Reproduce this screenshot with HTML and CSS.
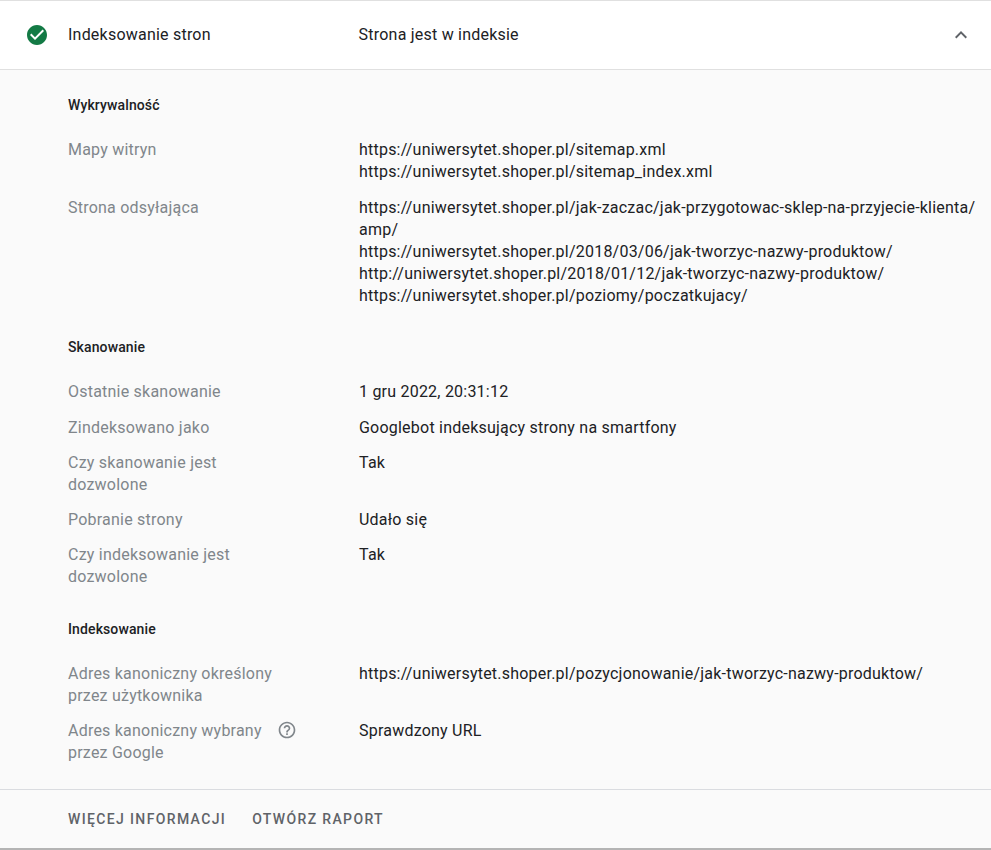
FILE: index.html
```html
<!DOCTYPE html>
<html lang="pl">
<head>
<meta charset="utf-8">
<title>Indeksowanie stron</title>
<link rel="stylesheet" href="styles.css">
</head>
<body>
<div class="panel">
  <header class="head">
    <svg class="status" viewBox="0 0 24 24" width="24" height="24"><path d="M12 2C6.48 2 2 6.48 2 12s4.48 10 10 10 10-4.48 10-10S17.52 2 12 2zm-2 15l-5-5 1.41-1.41L10 14.17l7.59-7.59L19 8l-9 9z"/></svg>
    <div class="head-title">Indeksowanie stron</div>
    <div class="head-value">Strona jest w indeksie</div>
    <svg class="chevron" viewBox="0 0 24 24" width="24" height="24"><path d="M12 8l-6 6 1.41 1.41L12 10.83l4.59 4.58L18 14z"/></svg>
  </header>
  <main class="content">
    <section class="group">
      <h2 class="group-title">Wykrywalność</h2>
      <div class="rows">
        <div class="row"><div class="label">Mapy witryn</div><div class="value"><div>https://uniwersytet.shoper.pl/sitemap.xml</div><div>https://uniwersytet.shoper.pl/sitemap_index.xml</div></div></div>
        <div class="row"><div class="label">Strona odsyłająca</div><div class="value"><div>https://uniwersytet.shoper.pl/jak-zaczac/jak-przygotowac-sklep-na-przyjecie-klienta/<wbr>amp/</div><div>https://uniwersytet.shoper.pl/2018/03/06/jak-tworzyc-nazwy-produktow/</div><div>http://uniwersytet.shoper.pl/2018/01/12/jak-tworzyc-nazwy-produktow/</div><div>https://uniwersytet.shoper.pl/poziomy/poczatkujacy/</div></div></div>
      </div>
    </section>
    <section class="group">
      <h2 class="group-title">Skanowanie</h2>
      <div class="rows">
        <div class="row"><div class="label">Ostatnie skanowanie</div><div class="value">1 gru 2022, 20:31:12</div></div>
        <div class="row"><div class="label">Zindeksowano jako</div><div class="value">Googlebot indeksujący strony na smartfony</div></div>
        <div class="row"><div class="label">Czy skanowanie jest dozwolone</div><div class="value">Tak</div></div>
        <div class="row"><div class="label">Pobranie strony</div><div class="value">Udało się</div></div>
        <div class="row"><div class="label">Czy indeksowanie jest dozwolone</div><div class="value">Tak</div></div>
      </div>
    </section>
    <section class="group">
      <h2 class="group-title">Indeksowanie</h2>
      <div class="rows">
        <div class="row"><div class="label">Adres kanoniczny określony przez użytkownika</div><div class="value">https://uniwersytet.shoper.pl/pozycjonowanie/jak-tworzyc-nazwy-produktow/</div></div>
        <div class="row"><div class="label">Adres kanoniczny wybrany przez Google</div>
          <svg class="help" viewBox="0 0 24 24" width="20" height="20"><path d="M11 18h2v-2h-2v2zm1-16C6.48 2 2 6.48 2 12s4.48 10 10 10 10-4.48 10-10S17.52 2 12 2zm0 18c-4.41 0-8-3.59-8-8s3.59-8 8-8 8 3.59 8 8-3.59 8-8 8zm0-14c-2.21 0-4 1.79-4 4h2c0-1.1.9-2 2-2s2 .9 2 2c0 2-3 1.75-3 5h2c0-2.25 3-2.5 3-5 0-2.21-1.79-4-4-4z"/></svg>
          <div class="value">Sprawdzony URL</div></div>
      </div>
    </section>
  </main>
  <footer class="foot">
    <span class="action">WIĘCEJ INFORMACJI</span>
    <span class="action">OTWÓRZ RAPORT</span>
  </footer>
</div>
</body>
</html>
```
FILE: styles.css
```css
html, body {
  margin: 0;
  padding: 0;
  background: #fafafa;
}
.panel {
  width: 991px;
  height: 850px;
  box-sizing: border-box;
  font-family: Roboto, "Liberation Sans", sans-serif;
  font-size: 16px;
  line-height: 22px;
  letter-spacing: 0.22px;
  color: #202124;
  border-top: 1px solid #e0e0e0;
  border-bottom: 2px solid #b4b4b4;
  display: flex;
  flex-direction: column;
}
.head {
  height: 68px;
  flex: none;
  background: #fff;
  border-bottom: 1px solid #e0e0e0;
  display: flex;
  align-items: center;
  padding-left: 25px;
  padding-right: 18px;
}
.status {
  fill: #137a45;
  flex: none;
  margin-right: 19px;
}
.head-title {
  width: 290.6px;
  flex: none;
}
.head-value {
  flex: 1;
}
.chevron {
  fill: #5f6368;
  flex: none;
}
.content {
  flex: 1;
  padding: 25.45px 8px 0 68px;
  display: flex;
  flex-direction: column;
  gap: 30.5px;
  border-bottom: 1px solid #dadce0;
}
.group-title {
  margin: -1px 0 23px;
  font-size: 14px;
  font-weight: 500;
  line-height: 22px;
  letter-spacing: 0.12px;
  color: #202124;
}
.rows {
  display: flex;
  flex-direction: column;
  gap: 13.3px;
}
.row {
  display: flex;
  position: relative;
}
.label {
  width: 215px;
  margin-right: 76px;
  flex: none;
  color: #80868b;
}
.value {
  flex: 1;
  min-width: 0;
}
.help {
  position: absolute;
  left: 209px;
  top: 0;
  fill: #80868b;
}
.foot {
  height: 58px;
  flex: none;
  display: flex;
  align-items: center;
  gap: 26px;
  padding-left: 68px;
}
.action {
  font-size: 14px;
  font-weight: 500;
  letter-spacing: 1.36px;
  color: #5f6368;
}
```
